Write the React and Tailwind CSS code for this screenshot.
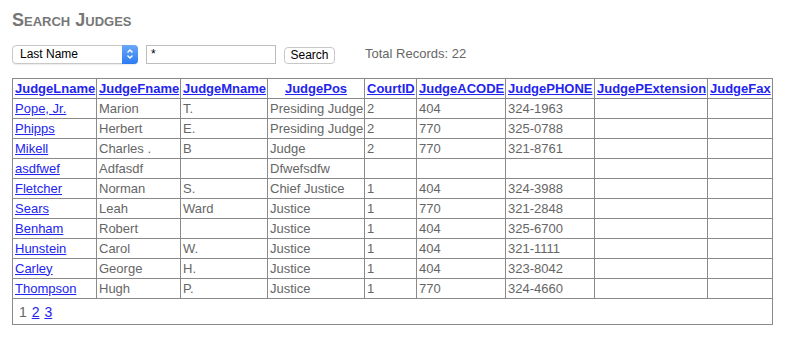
import React from "react";

const rows = [
  ["Pope, Jr.", "Marion", "T.", "Presiding Judge", "2", "404", "324-1963"],
  ["Phipps", "Herbert", "E.", "Presiding Judge", "2", "770", "325-0788"],
  ["Mikell", "Charles .", "B", "Judge", "2", "770", "321-8761"],
  ["asdfwef", "Adfasdf", "", "Dfwefsdfw", "", "", ""],
  ["Fletcher", "Norman", "S.", "Chief Justice", "1", "404", "324-3988"],
  ["Sears", "Leah", "Ward", "Justice", "1", "770", "321-2848"],
  ["Benham", "Robert", "", "Justice", "1", "404", "325-6700"],
  ["Hunstein", "Carol", "W.", "Justice", "1", "404", "321-1111"],
  ["Carley", "George", "H.", "Justice", "1", "404", "323-8042"],
  ["Thompson", "Hugh", "P.", "Justice", "1", "770", "324-4660"],
];

const headers = [
  ["JudgeLname", 84],
  ["JudgeFname", 84],
  ["JudgeMname", 87],
  ["JudgePos", 97],
  ["CourtID", 52],
  ["JudgeACODE", 89],
  ["JudgePHONE", 89],
  ["JudgePExtension", 113],
  ["JudgeFax", 65],
];

const link = "text-[#2424f0] underline";

export default function App() {
  return (
    <div className="bg-white w-[787px] h-[340px] pl-3 pt-[9px] text-[13px] text-[#666] font-['Liberation_Sans',Arial,sans-serif]">
      <h1 className="text-[18px] font-bold text-[#777] leading-[22px] [font-variant:small-caps]">
        Search Judges
      </h1>

      <div className="flex items-center mt-[13px] h-[20px]">
        <div className="flex items-center w-[126px] h-[19px] border border-[#c8c8c8] rounded-[4px] bg-white shadow-[0_1px_1px_rgba(0,0,0,0.08)]">
          <span className="flex-1 pl-[7px] text-[12px] text-black leading-none">Last Name</span>
          <span className="w-[16px] h-[19px] -mr-px rounded-r-[4px] bg-[linear-gradient(#6aa7f7,#2c7cf0)] flex items-center justify-center">
            <svg width="8" height="12" viewBox="0 0 8 12" fill="none" stroke="white" strokeWidth="1.4">
              <path d="M1.5 4.5 L4 2 L6.5 4.5" />
              <path d="M1.5 7.5 L4 10 L6.5 7.5" />
            </svg>
          </span>
        </div>
        <div className="ml-[8px] w-[130px] h-[19px] border border-[#bdbdbd] bg-white pl-[4px] text-[12px] text-black leading-[17px]">
          *
        </div>
        <button className="ml-[8px] w-[51px] h-[17px] mt-[2px] border border-[#c8c8c8] rounded-[4px] bg-white text-[12px] text-black leading-none">
          Search
        </button>
        <span className="ml-[30px] text-[13px] text-[#666]">Total Records: 22</span>
      </div>

      <table className="mt-[14px] border-collapse border border-[#8a8a8a] table-fixed w-[760px]">
        <colgroup>
          {headers.map(([h, w]) => (
            <col key={h} style={{ width: w }} />
          ))}
        </colgroup>
        <thead>
          <tr className="h-[20px]">
            {headers.map(([h]) => (
              <th key={h} className="border border-[#8a8a8a] px-[2px] py-0 text-[13px] font-bold text-center whitespace-nowrap leading-[18px]">
                <span className={link}>{h}</span>
              </th>
            ))}
          </tr>
        </thead>
        <tbody>
          {rows.map((r) => (
            <tr key={r[0]} className="h-[20px]">
              <td className="border border-[#8a8a8a] px-[2px] leading-[18px]">
                <span className={link}>{r[0]}</span>
              </td>
              {r.slice(1).map((c, i) => (
                <td key={i} className="border border-[#8a8a8a] px-[2px] leading-[18px] whitespace-nowrap">
                  {c}
                </td>
              ))}
              <td className="border border-[#8a8a8a]" />
              <td className="border border-[#8a8a8a]" />
            </tr>
          ))}
          <tr className="h-[26px]">
            <td colSpan={9} className="border border-[#8a8a8a] pl-[6px] leading-[18px] text-[14px] [word-spacing:1px]">
              1 <span className={link}>2</span> <span className={link}>3</span>
            </td>
          </tr>
        </tbody>
      </table>
    </div>
  );
}
